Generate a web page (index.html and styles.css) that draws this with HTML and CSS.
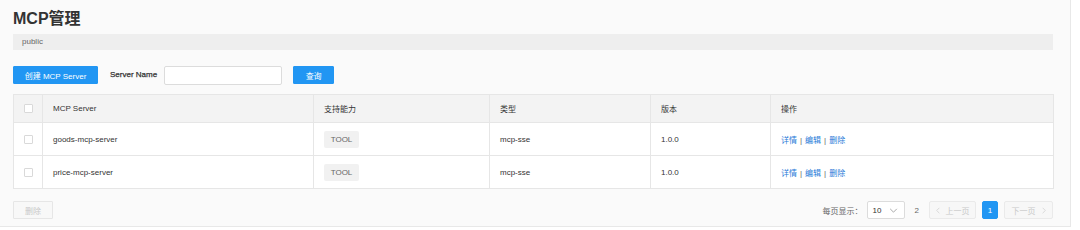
FILE: index.html
```html
<!DOCTYPE html>
<html lang="zh-CN">
<head>
<meta charset="utf-8">
<title>MCP管理</title>
<link rel="stylesheet" href="styles.css">
</head>
<body>
<div class="page">
  <h1 class="title">MCP管理</h1>
  <div class="ns-bar">public</div>
  <div class="toolbar">
    <button class="btn btn-primary btn-create">创建 MCP Server</button>
    <label class="field-label">Server Name</label>
    <input class="field-input" type="text">
    <button class="btn btn-primary btn-query">查询</button>
  </div>
  <table class="grid">
    <colgroup>
      <col class="c-check"><col class="c-name"><col class="c-cap"><col class="c-type"><col class="c-ver"><col class="c-op">
    </colgroup>
    <thead>
      <tr>
        <th class="cell-check"><span class="checkbox"></span></th>
        <th>MCP Server</th>
        <th>支持能力</th>
        <th>类型</th>
        <th>版本</th>
        <th>操作</th>
      </tr>
    </thead>
    <tbody>
      <tr>
        <td class="cell-check"><span class="checkbox"></span></td>
        <td>goods-mcp-server</td>
        <td><span class="tag">TOOL</span></td>
        <td>mcp-sse</td>
        <td>1.0.0</td>
        <td class="ops"><a>详情</a><span class="sep">|</span><a>编辑</a><span class="sep">|</span><a>删除</a></td>
      </tr>
      <tr>
        <td class="cell-check"><span class="checkbox"></span></td>
        <td>price-mcp-server</td>
        <td><span class="tag">TOOL</span></td>
        <td>mcp-sse</td>
        <td>1.0.0</td>
        <td class="ops"><a>详情</a><span class="sep">|</span><a>编辑</a><span class="sep">|</span><a>删除</a></td>
      </tr>
    </tbody>
  </table>
  <div class="footer">
    <button class="btn btn-disabled">删除</button>
    <div class="pager">
      <span class="pager-label">每页显示：</span>
      <div class="select"><span>10</span>
        <svg class="chev" viewBox="0 0 10 6" width="9" height="5"><path d="M1 1 L5 5 L9 1" fill="none" stroke="#999" stroke-width="1"/></svg>
      </div>
      <span class="total">2</span>
      <button class="pbtn pbtn-prev"><svg viewBox="0 0 6 10" width="4" height="7"><path d="M5 1 L1 5 L5 9" fill="none" stroke="#ccc" stroke-width="1"/></svg><span>上一页</span></button>
      <button class="pbtn pbtn-cur">1</button>
      <button class="pbtn pbtn-next"><span>下一页</span><svg viewBox="0 0 6 10" width="4" height="7"><path d="M1 1 L5 5 L1 9" fill="none" stroke="#ccc" stroke-width="1"/></svg></button>
    </div>
  </div>
</div>
</body>
</html>
```

FILE: styles.css
```css
* { box-sizing: border-box; }
html, body { margin: 0; padding: 0; background: #ffffff; }
body {
  font-family: "Liberation Sans", "Noto Sans CJK SC", Arial, sans-serif;
  color: #333;
  font-size: 8px;
}
.page {
  width: 1071px;
  height: 227px;
  background: #fafafa;
  border-right: 1px solid #e8e8e8;
  border-bottom: 1px solid #e8e8e8;
  padding: 9px 17px 0 13px;
}
.title {
  margin: 0;
  font-size: 16px;
  line-height: 20px;
  font-weight: 700;
  color: #333;
}
.ns-bar {
  margin-top: 5px;
  height: 16px;
  line-height: 16px;
  background: #eeeeee;
  color: #666;
  padding-left: 9px;
  font-size: 8px;
}
.toolbar {
  margin-top: 16px;
  display: flex;
  align-items: flex-start;
  height: 18px;
}
.btn {
  font-family: inherit;
  font-size: 8px;
  height: 18px;
  border: 1px solid transparent;
  border-radius: 1px;
  padding: 0;
  cursor: pointer;
}
.btn-primary { background: #2196f3; color: #fff; border-color: #2196f3; }
.btn-create { width: 85px; }
.field-label { margin-left: 12px; font-weight: 400; color: #333; line-height: 18px; -webkit-text-stroke: 0.25px #333; }
.field-input {
  margin-left: 7px;
  width: 118px;
  height: 19px;
  border: 1px solid #dcdcdc;
  border-radius: 2px;
  background: #fff;
}
.btn-query { margin-left: 11px; width: 41px; }
.grid {
  margin-top: 10px;
  width: 1040px;
  border-collapse: collapse;
  table-layout: fixed;
  background: #fff;
}
.c-check { width: 29px; }
.c-name { width: 271px; }
.c-cap { width: 176px; }
.c-type { width: 161px; }
.c-ver { width: 120px; }
.c-op { width: 283px; }
.grid th, .grid td {
  border: 1px solid #e6e6e6;
  text-align: left;
  padding: 0 10px;
  font-size: 8px;
  color: #333;
  white-space: nowrap;
}
.grid th { background: #f3f3f3; font-weight: 400; height: 28px; }
.grid td { height: 33px; }
.grid .cell-check { padding: 0 0 0 10px; }
.checkbox {
  display: block;
  width: 9px;
  height: 9px;
  border: 1px solid #d9d9d9;
  background: #fff;
  border-radius: 1px;
}
.tag {
  display: inline-block;
  width: 35px;
  height: 17px;
  line-height: 17px;
  text-align: center;
  background: #f1f1f1;
  color: #666;
  border-radius: 2px;
}
.ops a { color: #1f7ad8; }
.ops .sep { color: #666; margin: 0 3px; }
.footer {
  margin-top: 12px;
  display: flex;
  justify-content: space-between;
  align-items: center;
  width: 1040px;
}
.btn-disabled {
  width: 40px;
  background: #f8f8f8;
  border-color: #e6e6e6;
  color: #c8c8c8;
}
.pager { display: flex; align-items: center; height: 18px; }
.pager-label { color: #666; margin-right: 4px; }
.select {
  width: 38px;
  height: 18px;
  border: 1px solid #dcdcdc;
  border-radius: 2px;
  background: #fff;
  display: flex;
  align-items: center;
  justify-content: space-between;
  padding: 0 6px 0 5px;
  color: #333;
}
.total { color: #666; margin: 0 10px 0 10px; }
.pbtn {
  font-family: inherit;
  font-size: 8px;
  height: 18px;
  border: 1px solid #eaeaea;
  border-radius: 2px;
  background: #f7f7f7;
  color: #c8c8c8;
  display: flex;
  align-items: center;
  justify-content: center;
  gap: 6px;
  padding: 0;
}
.pbtn-prev { width: 47px; }
.pbtn-next { width: 49px; }
.pbtn-cur {
  width: 16px;
  margin: 0 6px;
  background: #2196f3;
  border-color: #2196f3;
  color: #fff;
}
```
